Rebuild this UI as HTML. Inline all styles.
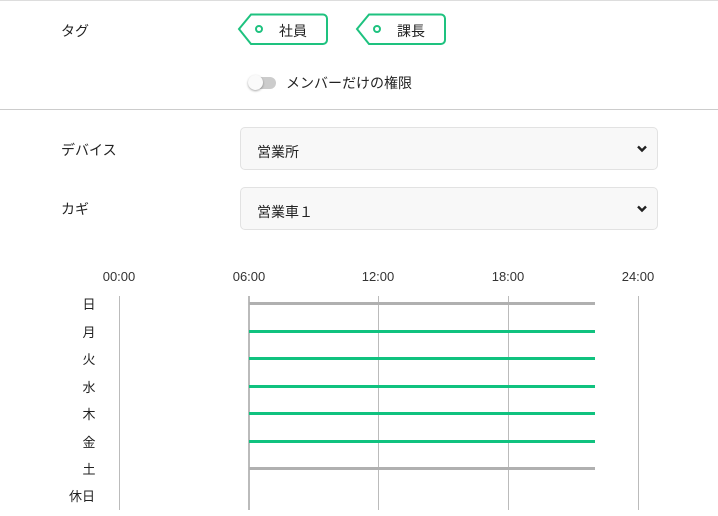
<!DOCTYPE html>
<html><head><meta charset="utf-8"><style>
body{margin:0;width:718px;height:516px;background:#fff;font-family:"Liberation Sans","Noto Sans CJK JP",sans-serif;color:#222;position:relative;overflow:hidden}
.a{position:absolute}
.lbl{font-size:14px;left:61px}
.sel{position:absolute;left:240px;width:418px;height:43px;background:#f8f8f8;border:1px solid #e2e2e2;border-radius:5px;box-sizing:border-box;font-size:14px;line-height:48px;padding-left:16px}
.sel svg{position:absolute;right:10px;top:17px}
.t{font-size:13px;color:#333;transform:translateX(-50%)}
.d{font-size:13px;transform:translateX(-50%);width:30px;text-align:center}
.v{position:absolute;top:296px;height:214px;width:1px;background:#bbb}
.h{position:absolute;left:249px;width:346px;height:3px}
</style></head><body>
<div class="a" style="left:0;top:0;width:718px;height:1px;background:#ddd"></div>
<div class="a lbl" style="top:21px">タグ</div>
<svg class="a" style="left:237px;top:13px" width="212" height="34">
<path d="M14 1.5H86a4 4 0 0 1 4 4V27a4 4 0 0 1-4 4H14L2 16Z" fill="#fff" stroke="#1ec27f" stroke-width="2"/>
<circle cx="22" cy="16" r="3" fill="none" stroke="#1ec27f" stroke-width="2"/>
<path d="M132 1.5H204a4 4 0 0 1 4 4V27a4 4 0 0 1-4 4H132L120 16Z" fill="#fff" stroke="#1ec27f" stroke-width="2"/>
<circle cx="140" cy="16" r="3" fill="none" stroke="#1ec27f" stroke-width="2"/>
</svg>
<div class="a" style="left:279px;top:21px;font-size:14px">社員</div>
<div class="a" style="left:397px;top:21px;font-size:14px">課長</div>
<div class="a" style="left:250px;top:77px;width:26px;height:12px;border-radius:6px;background:#ccc"></div>
<div class="a" style="left:248px;top:75px;width:15px;height:15px;border-radius:50%;background:#fafafa;box-shadow:0 1px 2px rgba(0,0,0,.35)"></div>
<div class="a" style="left:286px;top:73px;font-size:14px">メンバーだけの権限</div>
<div class="a" style="left:0;top:109px;width:718px;height:1px;background:#ccc"></div>
<div class="a lbl" style="top:140px">デバイス</div>
<div class="sel" style="top:127px">営業所<svg width="10" height="8"><path d="M1 1.5L5 5.5L9 1.5" stroke="#222" stroke-width="2.4" fill="none"/></svg></div>
<div class="a lbl" style="top:199px">カギ</div>
<div class="sel" style="top:187px">営業車１<svg width="10" height="8"><path d="M1 1.5L5 5.5L9 1.5" stroke="#222" stroke-width="2.4" fill="none"/></svg></div>
<div class="a t" style="left:119px;top:269px">00:00</div>
<div class="a t" style="left:249px;top:269px">06:00</div>
<div class="a t" style="left:378px;top:269px">12:00</div>
<div class="a t" style="left:508px;top:269px">18:00</div>
<div class="a t" style="left:638px;top:269px">24:00</div>
<div class="v" style="left:119px"></div><div class="v" style="left:248px;width:2px"></div><div class="v" style="left:378px"></div><div class="v" style="left:508px"></div><div class="v" style="left:638px"></div>
<div class="h" style="top:302px;background:#b0b0b0"></div>
<div class="h" style="top:330px;background:#10c27f"></div>
<div class="h" style="top:357px;background:#10c27f"></div>
<div class="h" style="top:385px;background:#10c27f"></div>
<div class="h" style="top:412px;background:#10c27f"></div>
<div class="h" style="top:440px;background:#10c27f"></div>
<div class="h" style="top:467px;background:#b0b0b0"></div>
<div class="a d" style="left:89px;top:294px">日</div>
<div class="a d" style="left:89px;top:322px">月</div>
<div class="a d" style="left:89px;top:349px">火</div>
<div class="a d" style="left:89px;top:377px">水</div>
<div class="a d" style="left:89px;top:404px">木</div>
<div class="a d" style="left:89px;top:432px">金</div>
<div class="a d" style="left:89px;top:459px">土</div>
<div class="a d" style="left:82px;top:486px">休日</div>
</body></html>
